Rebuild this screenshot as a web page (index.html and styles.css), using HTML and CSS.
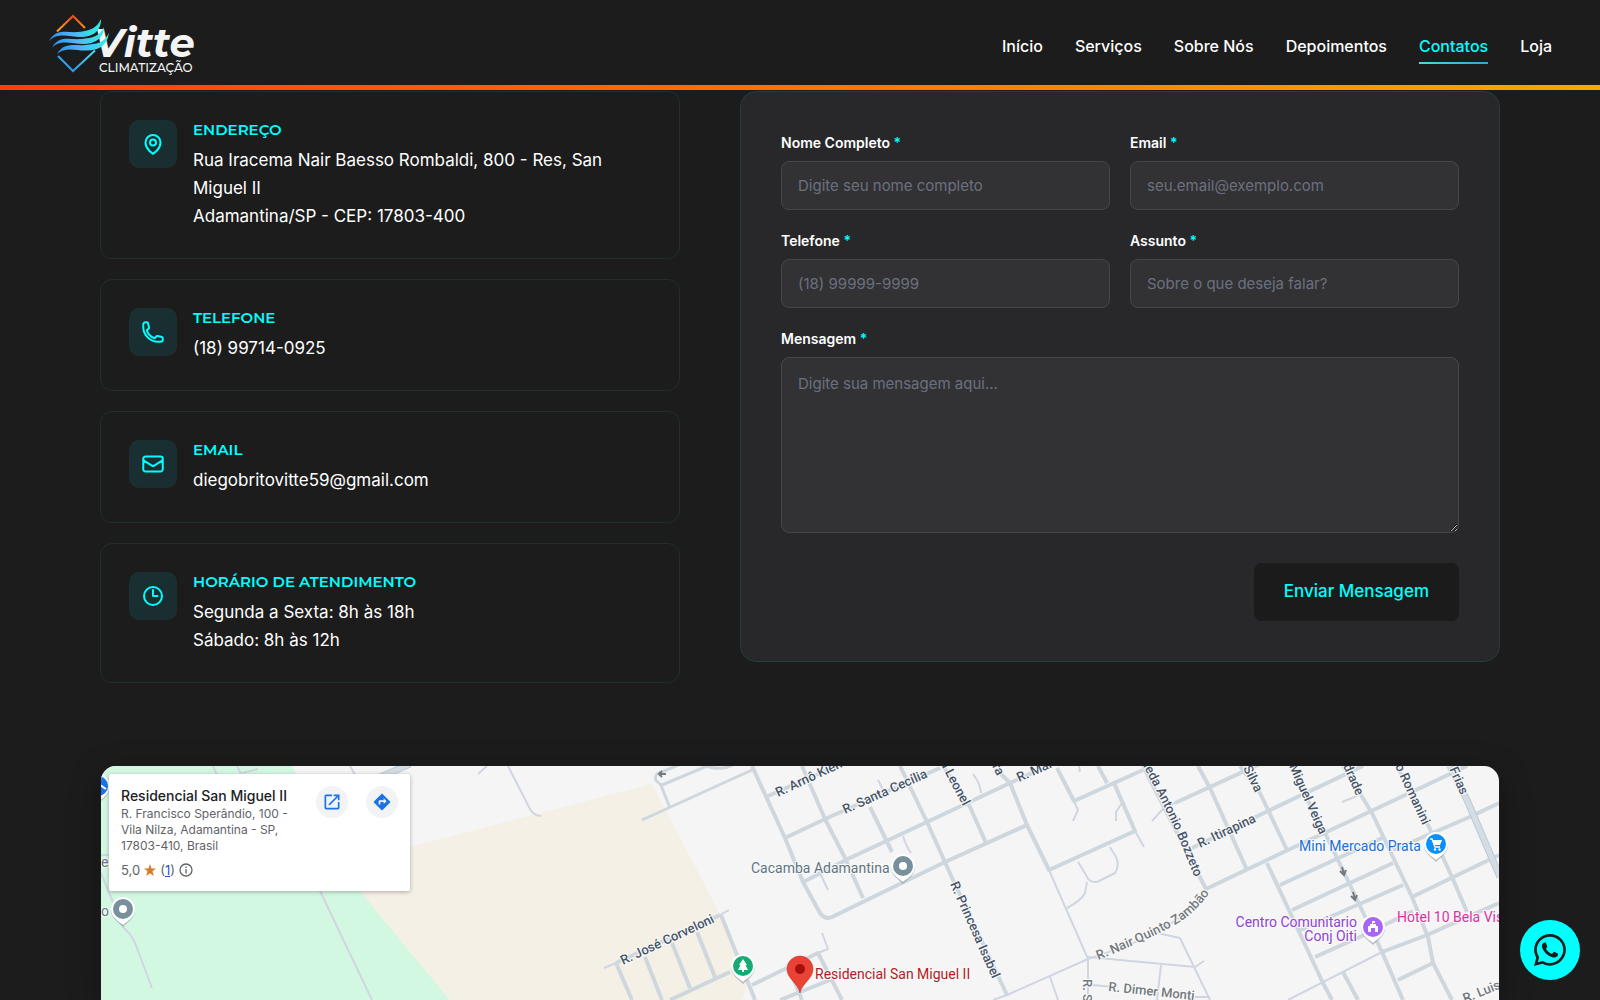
FILE: index.html
```html
<!DOCTYPE html>
<html lang="pt-BR">
<head>
<meta charset="utf-8">
<meta name="viewport" content="width=device-width, initial-scale=1">
<title>Vitte Climatização - Contatos</title>
<link rel="stylesheet" href="styles.css">
</head>
<body>
<header class="header">
  <a class="logo" href="#inicio" aria-label="Vitte Climatização">
    <svg width="160" height="64" viewBox="44 11 160 64" fill="none">
      <defs>
        <linearGradient id="fire" x1="0" y1="0" x2="0" y2="1"><stop offset="0" stop-color="#f2481b"/><stop offset="1" stop-color="#f9a51a"/></linearGradient>
        <linearGradient id="wave" x1="0" y1="0" x2="1" y2="0"><stop offset="0" stop-color="#2a8ff0"/><stop offset=".45" stop-color="#4fb4f6"/><stop offset="1" stop-color="#2ff0e4"/></linearGradient>
        <linearGradient id="ice" x1="0" y1="1" x2="1" y2="0"><stop offset="0" stop-color="#2a86ee"/><stop offset="1" stop-color="#3fe0ea"/></linearGradient>
      </defs>
      <path d="M57 31.500L73 16L85 28" stroke="url(#fire)" stroke-width="2"/>
      <path d="M58 56L73 71L95 50.500" stroke="url(#ice)" stroke-width="2"/>
      <text class="logo-name" x="94" y="57">Vitte</text>
      <text class="logo-sub" x="99" y="72">CLIMATIZAÇÃO</text>
      <g fill="url(#wave)">
        <path d="M49 41C56 28 68 33 78 32C90 31 97 28 101 19C101 32 92 37 80 37C70 37 58 32 49 41Z"/>
        <path d="M52 47.500C59 35 70 40 81 39C93 38 100 36 104 27C104 38 95 44 83 44C72 44 61 39 52 47.500Z"/>
        <path d="M57 54C64 42 74 46 85 45C97 44 104 43 109 33C107 46 99 50 87 50.500C76 51 66 46 57 54Z"/>
      </g>
    </svg>
  </a>
  <nav class="nav">
    <a href="#inicio">Início</a>
    <a href="#servicos">Serviços</a>
    <a href="#sobre">Sobre Nós</a>
    <a href="#depoimentos">Depoimentos</a>
    <a class="active" href="#contatos">Contatos</a>
    <a href="#loja">Loja</a>
  </nav>
</header>

<main class="container">
  <div class="contact">
    <section class="info">
      <article class="info-card">
        <span class="info-icon"><svg viewBox="0 0 24 24"><path d="M15 10.500a3 3 0 11-6 0 3 3 0 016 0z"/><path d="M19.500 10.500c0 7.142-7.500 11.250-7.500 11.250S4.500 17.642 4.500 10.500a7.500 7.500 0 1115 0z"/></svg></span>
        <div><h3>ENDEREÇO</h3><p>Rua Iracema Nair Baesso Rombaldi, 800 - Res, San Miguel II<br>Adamantina/SP - CEP: 17803-400</p></div>
      </article>
      <article class="info-card">
        <span class="info-icon"><svg viewBox="0 0 24 24"><path d="M2.250 6.750c0 8.284 6.716 15 15 15h2.250a2.250 2.250 0 002.250-2.250v-1.372c0-.516-.351-.966-.852-1.091l-4.423-1.106c-.44-.11-.902.055-1.173.417l-.97 1.293c-.282.376-.769.542-1.210.38a12.035 12.035 0 01-7.143-7.143c-.162-.441.004-.928.38-1.210l1.293-.97c.363-.271.527-.734.417-1.173L6.963 3.102a1.125 1.125 0 00-1.091-.852H4.500A2.250 2.250 0 002.250 4.500v2.250z"/></svg></span>
        <div><h3>TELEFONE</h3><p>(18) 99714-0925</p></div>
      </article>
      <article class="info-card">
        <span class="info-icon"><svg viewBox="0 0 24 24"><path d="M21.750 6.750v10.500a2.250 2.250 0 01-2.250 2.250h-15a2.250 2.250 0 01-2.250-2.250V6.750m19.500 0A2.250 2.250 0 0019.500 4.500h-15a2.250 2.250 0 00-2.250 2.250m19.500 0v.243a2.250 2.250 0 01-1.070 1.916l-7.500 4.615a2.250 2.250 0 01-2.360 0L3.320 8.910a2.250 2.250 0 01-1.070-1.916V6.750"/></svg></span>
        <div><h3>EMAIL</h3><p>diegobritovitte59@gmail.com</p></div>
      </article>
      <article class="info-card">
        <span class="info-icon"><svg viewBox="0 0 24 24"><path d="M12 6v6h4.500m4.500 0a9 9 0 11-18 0 9 9 0 0118 0z"/></svg></span>
        <div><h3>HORÁRIO DE ATENDIMENTO</h3><p>Segunda a Sexta: 8h às 18h<br>Sábado: 8h às 12h</p></div>
      </article>
    </section>

    <form class="form">
      <div class="field"><label for="nome">Nome Completo <span>*</span></label><input id="nome" type="text" placeholder="Digite seu nome completo"></div>
      <div class="field"><label for="email">Email <span>*</span></label><input id="email" type="email" placeholder="seu.email@exemplo.com"></div>
      <div class="field"><label for="telefone">Telefone <span>*</span></label><input id="telefone" type="tel" placeholder="(18) 99999-9999"></div>
      <div class="field"><label for="assunto">Assunto <span>*</span></label><input id="assunto" type="text" placeholder="Sobre o que deseja falar?"></div>
      <div class="field wide"><label for="mensagem">Mensagem <span>*</span></label><textarea id="mensagem" placeholder="Digite sua mensagem aqui..."></textarea></div>
      <button class="submit" type="submit">Enviar Mensagem</button>
    </form>
  </div>

  <section class="map">
    <svg class="map-canvas" viewBox="101 766 1398 234" preserveAspectRatio="xMinYMin slice">
      <defs>
        <path id="nair" d="M1098 960Q1147 940 1171 927Q1196 914 1212 889"/>
        <path id="alameda" d="M1141 762Q1166 808 1182 846L1201 893"/>
        <g id="pin">
          <path d="M0 17C-3 13-12 9-12 0A12 12 0 0112 0C12 9 3 13 0 17Z" fill="#8a9299" opacity=".6"/>
          <path d="M0 15C-3 12-12 8-12-1A12 12 0 0112-1C12 8 3 12 0 15Z" fill="#fff"/>
        </g>
      </defs>
      <rect x="101" y="766" width="1398" height="234" fill="#f5f5f5"/>
      <path d="M101 766H292L360 891L450 1000H101Z" fill="#d3f8e2"/>
      <path d="M360 891V862L410 847L490 826L652 784L667 813L720 914L747 985L742 1000H450Z" fill="#f4f0e5"/>
      <g class="road thin">
        <path d="M213 766L217 775M237 766L241 774M242 773L258 769M350 766L357 778M478 774L487 766"/>
        <path d="M320 891L372 1000M101 873L123 927Q131 934 135 943L152 988M101 855H110"/>
        <path d="M508 766L530 809Q534 816 541 816"/>
        <path d="M820 873L828 890M878 780L883 790M604 968L616 963M720 915L729 910M818 953L828 949L822 933"/>
        <path d="M973 774Q980 783 981 793M903 836Q906 846 911 853"/>
        <path d="M1049 870L1088 959V1000M1135 831L1144 847M1079 766L1080 772M1074 801L1078 810L1073 821M1122 803L1116 812V821"/>
        <path d="M1078 862L1086 875Q1089 883 1097 882L1115 873Q1120 865 1116 857L1110 847M1087 882L1085 893Q1082 900 1067 908"/>
        <path d="M1088 959L1007 995L993 1000M1050 977L1058 1000M1088 957L1195 967L1204 961M1157 933L1180 938L1210 1000M1161 965L1157 1000M1092 985L1115 987M1188 997H1210"/>
        <path d="M1088 959L1100 955Q1180 930 1206 890M1152 821L1162 810L1175 803M1342 802L1357 796M1288 1000L1382 952"/>
      </g>
      <g class="road">
        <path d="M642 820L752 770M670 808L660 783M662 785L707 766M662 785Q652 780 657 774L683 763M703 765Q722 772 734 764" stroke-width="3"/>
        <path d="M752 766L785 838L803 882L820 913Q825 920 832 917L945 862L1027 825M768 796L843 763M785 838L825 819L940 768"/>
        <path d="M802 766L825 819L845 858L863 898M803 882L850 858L927 822L1010 783L1050 765M870 807L892 852"/>
        <path d="M616 963L720 915M616 963L632 1000M645 957L662 1000M672 943L690 988M697 932L715 977M721 915L755 1000M670 1000L730 972"/>
        <path d="M752 985L818 953L842 1000M780 1000L830 980M792 975L802 1000"/>
        <path d="M900 766L927 822L953 880L1007 995M943 766L970 807L986 843M993 766L1010 783L1027 825L1049 870L1135 831L1114 783M1057 768L1074 801L1143 770M1098 766L1107 783"/>
        <path d="M1143 766L1206 889L1288 850L1367 813L1467 766M1175 803L1260 764M1198 766L1210 788L1247 870M1192 848L1268 811L1363 766"/>
        <path d="M1240 766L1260 793L1287 850M1290 766L1327 837L1382 952L1403 1000M1343 766L1372 813L1412 897L1428 937L1433 963L1452 1000"/>
        <path d="M1397 766L1428 825L1452 877L1467 912M1267 863L1323 983L1332 1000M1280 885L1382 838M1292 910L1393 863M1300 930L1403 885M1315 957L1362 936L1413 911"/>
        <path d="M1382 952L1427 935L1499 903M1398 980L1433 963M1412 897L1499 855M1393 850L1472 816L1499 803M1343 972L1358 1000"/>
        <path d="M378 778L410 764M1447 760L1467 800L1500 877" stroke="#bccbd6" stroke-width="7"/>
        <path d="M378 778L410 764M1447 760L1467 800L1500 877" stroke="#d5dde4" stroke-width="5"/>
      </g>
      <g fill="none" stroke="#737b82" stroke-width="2">
        <path d="M666 774H659M662 771L659 774L662 777M1342 867L1344 874M1340 871L1344 875L1346 870M1353 892L1355 899M1351 896L1355 900L1357 895"/>
      </g>
      <g class="street">
        <text transform="translate(778 797) rotate(-25)">R. Arnô Kien</text>
        <text transform="translate(845 814) rotate(-24)">R. Santa Cecília</text>
        <text transform="translate(940 763) rotate(62)">a Leonel</text>
        <text transform="translate(992 766) rotate(63)">ra</text>
        <text transform="translate(1019 782) rotate(-24)">R. Mar</text>
        <text><textPath href="#alameda">neda Antonio Bozzeto</textPath></text>
        <text transform="translate(1200 848) rotate(-25)">R. Itirapina</text>
        <text transform="translate(1243 768) rotate(64)">Silva</text>
        <text transform="translate(1289 766) rotate(66)">Miguel Veiga</text>
        <text transform="translate(1343 766) rotate(66)">drade</text>
        <text transform="translate(1395 766) rotate(65)">o Romanini</text>
        <text transform="translate(1445 760) rotate(66)">a Frias</text>
        <text transform="translate(623 965) rotate(-25)">R. José Corveloni</text>
        <text transform="translate(950 884) rotate(66)">R. Princesa Isabel</text>
        <g class="minor">
          <text><textPath href="#nair">R. Nair Quinto Zambão</textPath></text>
          <text transform="translate(1108 991) rotate(6)">R. Dimer Monti</text>
          <text transform="translate(1083 979) rotate(90)">R. S</text>
          <text transform="translate(1465 1003) rotate(-22)">R. Luis</text>
        </g>
      </g>
      <g class="place">
        <text x="751" y="873" fill="#5f7582">Cacamba Adamantina</text>
        <text x="815" y="979" fill="#b3191e">Residencial San Miguel II</text>
        <text x="1299" y="851" fill="#1a6fd6">Mini Mercado Prata</text>
        <text x="1357" y="927" text-anchor="end" fill="#8d42d3">Centro Comunitario</text>
        <text x="1357" y="941" text-anchor="end" fill="#8d42d3">Conj Oiti</text>
        <text x="1397" y="922" fill="#dc2fa0">Hotel 10 Bela Vis</text>
        <text x="101" y="867" fill="#5f7582">e</text>
        <text x="101" y="916" fill="#5f7582">o</text>
      </g>
      <g transform="translate(98 787)"><use href="#pin"/><circle cy="-1" r="10" fill="#1a73e8"/><path d="M2-2L8 2" stroke="#fff" stroke-width="2"/></g>
      <g transform="translate(123 910)"><use href="#pin"/><circle cy="-1" r="10" fill="#78909c"/><circle cy="-1" r="4" fill="#fff"/></g>
      <g transform="translate(903 867)"><use href="#pin"/><circle cy="-1" r="10" fill="#78909c"/><circle cy="-1" r="4" fill="#fff"/></g>
      <g transform="translate(743 967)"><use href="#pin"/><circle cy="-1" r="10" fill="#19a974"/><path d="M0-8L4-2H2.500L5 3H1V5H-1V3H-5L-2.500-2H-4Z" fill="#fff"/></g>
      <g transform="translate(1436 845)"><use href="#pin"/><circle cy="-1" r="10" fill="#0b8ffb"/><path d="M-6-6H-4L-1 2H4" stroke="#fff" stroke-width="1.300" fill="none"/><path d="M-4-5H6L4 0H-2Z" fill="#fff"/><circle cx="-1" cy="4.500" r="1.200" fill="#fff"/><circle cx="3.500" cy="4.500" r="1.200" fill="#fff"/></g>
      <g transform="translate(1373 928)"><use href="#pin"/><circle cy="-1" r="10" fill="#a964f7"/><path d="M-5 4V-2H-3V-4H-1V-7H2V-5H0V-4H3V-2H5V4H2V0H-2V4Z" fill="#fff"/></g>
      <path d="M800 993C798 983 787 979 787 969A13 13 0 01813 969C813 979 802 983 800 993Z" fill="#ea4335" stroke="#c5221f" stroke-width=".5"/>
      <circle cx="800" cy="969" r="5" fill="#a50e0e"/>
    </svg>
    <div class="place-card">
      <div class="place-text">
        <h4>Residencial San Miguel II</h4>
        <address>R. Francisco Sperândio, 100 - Vila Nilza, Adamantina - SP, 17803-410, Brasil</address>
        <div class="rating">5,0
          <svg width="12" height="12" viewBox="0 0 24 24" fill="#d57a27"><path d="M12 0L15 9H24L17 14.500L19.500 24L12 18.500L4.500 24L7 14.500L0 9H9Z"/></svg>
          <span>(<a href="#avaliacoes">1</a>)</span>
          <svg width="14" height="14" viewBox="0 0 14 14" fill="none" stroke="#5f6368" stroke-width="1.300"><circle cx="7" cy="7" r="6"/><path d="M7 6V10.500M7 3.500V5"/></svg>
        </div>
      </div>
      <a class="round" href="#abrir" aria-label="Abrir no Maps"><svg width="20" height="20" viewBox="0 0 24 24" fill="#1a73e8"><path d="M19 19H5V5h7V3H5a2 2 0 00-2 2v14a2 2 0 002 2h14a2 2 0 002-2v-7h-2v7zM14 3v2h3.590l-9.830 9.830 1.410 1.410L19 6.410V10h2V3h-7z"/></svg></a>
      <a class="round" href="#rotas" aria-label="Rotas"><svg width="20" height="20" viewBox="0 0 24 24" fill="#1a73e8"><path d="M21.710 11.290l-9-9a1 1 0 00-1.410 0l-9 9a1 1 0 000 1.410l9 9c.39.39 1.020.39 1.410 0l9-9a1 1 0 000-1.410zM14 14.500V12h-4v3H8v-4c0-.55.45-1 1-1h5V7.500l3.500 3.500-3.500 3.500z"/></svg></a>
    </div>
  </section>
</main>

<a class="whatsapp" href="#whatsapp" aria-label="WhatsApp">
  <svg width="32" height="32" viewBox="0 0 16 16" fill="#1c1c1c"><path d="M13.601 2.326A7.854 7.854 0 0 0 7.994 0C3.627 0 .068 3.558.064 7.926c0 1.399.366 2.760 1.057 3.965L0 16l4.204-1.102a7.933 7.933 0 0 0 3.790.965h.004c4.368 0 7.926-3.558 7.930-7.930A7.898 7.898 0 0 0 13.600 2.326zM7.994 14.521a6.573 6.573 0 0 1-3.356-.92l-.24-.144-2.494.654.666-2.433-.156-.251a6.560 6.560 0 0 1-1.007-3.505c0-3.626 2.957-6.584 6.591-6.584a6.560 6.560 0 0 1 4.660 1.931 6.557 6.557 0 0 1 1.928 4.660c-.004 3.639-2.961 6.592-6.592 6.592zm3.615-4.934c-.197-.099-1.170-.578-1.353-.646-.182-.065-.315-.099-.445.099-.133.197-.513.646-.627.775-.114.133-.232.148-.43.05-.197-.1-.836-.308-1.592-.985-.59-.525-.985-1.175-1.103-1.372-.114-.198-.011-.304.088-.403.087-.088.197-.232.296-.346.1-.114.133-.198.198-.33.065-.134.034-.248-.015-.347-.05-.099-.445-1.076-.612-1.470-.16-.389-.323-.335-.445-.34-.114-.007-.247-.007-.38-.007a.729.729 0 0 0-.529.247c-.182.198-.691.677-.691 1.654 0 .977.71 1.916.81 2.049.098.133 1.394 2.132 3.383 2.992.47.205.84.326 1.129.418.475.152.904.129 1.246.08.38-.058 1.171-.48 1.338-.943.164-.464.164-.86.114-.943-.049-.084-.182-.133-.38-.232z"/></svg>
</a>
</body>
</html>
```
FILE: styles.css
```css
* {
  box-sizing: border-box;
}

body {
  margin: 0;
  min-height: 100vh;
  display: flex;
  flex-direction: column;
  background: #1c1c1c;
  color: #fff;
  font-family: Inter, "Liberation Sans", sans-serif;
}

h3, h4, p {
  margin: 0;
}

a {
  text-decoration: none;
}

/* Header */
.header {
  position: sticky;
  top: 0;
  z-index: 10;
  display: flex;
  align-items: center;
  justify-content: space-between;
  height: 90px;
  padding: 0 48px 0 44px;
  background: #1c1c1c;
  border-bottom: 5px solid;
  border-image: linear-gradient(90deg, #ff4000, #ffa500) 1;
}

.logo svg {
  display: block;
}

.logo-name {
  font: italic 700 40px Montserrat, Inter, sans-serif;
  fill: #f4f4f4;
}

.logo-sub {
  font: 500 12px Montserrat, Inter, sans-serif;
  fill: #f4f4f4;
}

.nav {
  display: flex;
  gap: 32px;
}

.nav a {
  padding: 12px 0 4px;
  color: #fff;
  font-size: 16px;
  font-weight: 500;
  line-height: 24px;
  border-bottom: 2px solid transparent;
}

.nav .active {
  color: #00ffff;
  border-image: linear-gradient(90deg, #40e0e0, #409fd0) 1;
}

/* Contact */
.container {
  flex: 1;
  display: flex;
  flex-direction: column;
  gap: 82px;
  width: 100%;
  max-width: 1440px;
  margin: 0 auto;
  padding: 1px 20px 0;
}

.contact {
  display: grid;
  grid-template-columns: 29fr 38fr;
  gap: 60px;
  align-items: start;
}

.info {
  display: grid;
  gap: 20px;
}

.info-card {
  display: flex;
  gap: 16px;
  padding: 28px;
  border: 1px solid #1d2f2f;
  border-radius: 12px;
}

.info-icon {
  display: flex;
  flex: none;
  align-items: center;
  justify-content: center;
  width: 48px;
  height: 48px;
  border-radius: 10px;
  background: linear-gradient(135deg, #193032, #1a2d31);
}

.info-icon svg {
  width: 24px;
  height: 24px;
  fill: none;
  stroke: #00ffff;
  stroke-width: 2;
  stroke-linecap: round;
  stroke-linejoin: round;
}

.info h3 {
  margin-bottom: 6px;
  color: #00ffff;
  font-family: Montserrat, Inter, sans-serif;
  font-size: 15px;
  font-weight: 600;
  line-height: 20px;
}

.info p {
  font-size: 17px;
  line-height: 28px;
}

/* Form */
.form {
  display: grid;
  grid-template-columns: 1fr 1fr;
  gap: 20px;
  padding: 40px;
  background: #28282a;
  border: 1px solid #263c3d;
  border-radius: 16px;
}

.field {
  display: grid;
  gap: 8px;
}

.wide {
  grid-column: 1 / -1;
}

.field label {
  font-size: 14px;
  font-weight: 600;
  line-height: 21px;
}

.field span {
  color: #00ffff;
}

.field input,
.field textarea {
  width: 100%;
  padding: 14px 16px;
  background: #323234;
  border: 1px solid #464648;
  border-radius: 8px;
  color: #fff;
  font: 15px/24px Inter, sans-serif;
}

.field input {
  height: 49px;
}

.field textarea {
  height: 176px;
  resize: vertical;
}

.field ::placeholder {
  color: #6b7080;
}

.submit {
  grid-column: 1 / -1;
  justify-self: end;
  margin-top: 10px;
  padding: 14px 30px 16px;
  background: #1b1b1b;
  border: 0;
  border-radius: 8px;
  color: #00ffff;
  font: 500 17px/28px Inter, sans-serif;
}

/* Map */
.map {
  position: relative;
  flex: 1;
  min-height: 235px;
  overflow: hidden;
  border: 1px solid #1c1c1c;
  border-bottom: 0;
  border-radius: 16px 16px 0 0;
  box-shadow: 0 8px 32px rgba(0, 0, 0, 0.3);
}

.map-canvas {
  position: absolute;
  inset: 0;
  width: 100%;
  height: 100%;
}

.road {
  fill: none;
  stroke: #cdd7dd;
  stroke-width: 4;
  stroke-linejoin: round;
}

.thin {
  stroke: #d0d6e1;
  stroke-width: 2;
}

.street,
.place {
  font-family: Roboto, sans-serif;
  paint-order: stroke;
  stroke: #fafafa;
  stroke-width: 2px;
}

.street {
  font-size: 13px;
  font-weight: 500;
  fill: #475569;
}

.minor {
  fill: #74797f;
}

.place {
  font-size: 14px;
}

.place-card {
  position: absolute;
  top: 8px;
  left: 8px;
  display: flex;
  gap: 18px;
  width: 301px;
  height: 117px;
  padding: 12px;
  background: #fff;
  border-radius: 2px;
  box-shadow: 0 1px 4px rgba(0, 0, 0, 0.3);
  color: #5f6368;
}

.place-text {
  flex: 1;
}

.place-card h4 {
  color: #202124;
  font: 500 14px/20px Inter, sans-serif;
  white-space: nowrap;
}

.place-card address {
  font: 12px/16px Inter, sans-serif;
}

.rating {
  display: flex;
  align-items: center;
  gap: 4px;
  margin-top: 8px;
  font-size: 13px;
  line-height: 16px;
}

.rating a {
  color: #1a55d0;
  text-decoration: underline;
}

.round {
  display: flex;
  align-items: center;
  justify-content: center;
  width: 32px;
  height: 32px;
  border-radius: 50%;
  background: #f1f3f4;
}

/* Floating button */
.whatsapp {
  position: fixed;
  right: 20px;
  bottom: 20px;
  z-index: 20;
  display: flex;
  align-items: center;
  justify-content: center;
  width: 60px;
  height: 60px;
  border-radius: 50%;
  background: #00ffff;
}
```
